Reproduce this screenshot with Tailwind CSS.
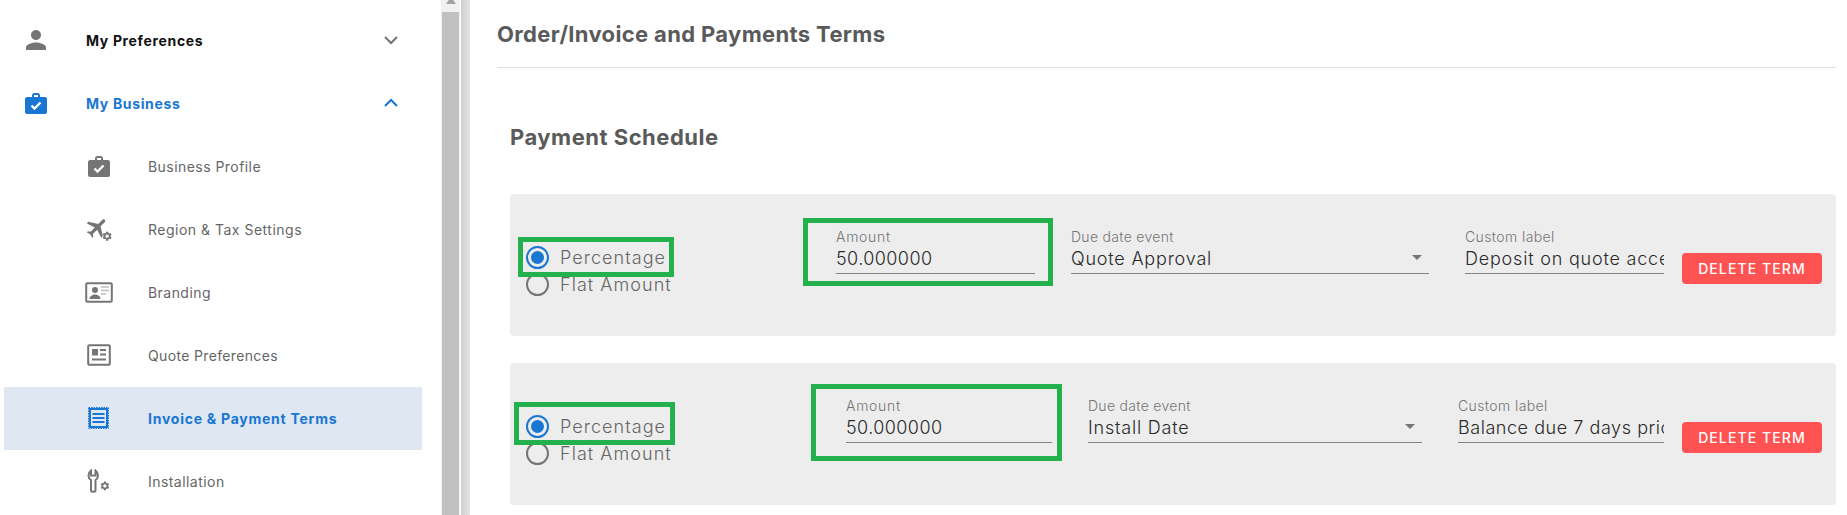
<!doctype html>
<html><head><meta charset="utf-8"><script src="https://cdn.jsdelivr.net/npm/@tailwindcss/browser@4"></script></head>
<body class="bg-white">
<div class="flex h-[515px] w-[1847px] overflow-hidden font-['Inter','Liberation_Sans',sans-serif] text-[#5f5f5f]">
  <aside class="w-[441px] shrink-0 pl-[4px] pr-[19px] pt-[8.5px]">
    <div class="flex h-[63px] items-center pt-[0.5px]">
      <svg class="ml-[17px] h-[30px] w-[30px] fill-[#757575]" viewBox="0 0 24 24"><path d="M12 12c2.210 0 4-1.790 4-4s-1.790-4-4-4-4 1.790-4 4 1.790 4 4 4zm0 2c-2.670 0-8 1.340-8 4v2h16v-2c0-2.660-5.330-4-8-4z"/></svg>
      <span class="ml-[35px] text-[14px] font-bold tracking-[0.65px] text-[#111]">My Preferences</span>
      <svg class="ml-auto mr-[24px] h-[14px] w-[14px] fill-none stroke-[#757575] stroke-2" viewBox="0 0 14 14"><path d="M1 4l6 6 6-6"/></svg>
    </div>
    <div class="flex h-[63px] items-center pt-[0.5px]">
      <svg class="ml-[20px] h-[24px] w-[24px]" viewBox="0 0 24 24"><path class="fill-[#1976d2]" d="M8 4.500C8 3 9 2 10.500 2h3C15 2 16 3 16 4.500V6h5c1 0 2 1 2 2v13c0 1-1 2-2 2H3c-1 0-2-1-2-2V8c0-1 1-2 2-2h5V4.500zM10 4v2h4V4h-4z"/><path class="fill-none stroke-white stroke-[2.4]" d="M7.500 14.500l3 3 6-6"/></svg>
      <span class="ml-[38px] text-[14px] font-bold tracking-[0.65px] text-[#1976d2]">My Business</span>
      <svg class="ml-auto mr-[24px] h-[14px] w-[14px] fill-none stroke-[#1976d2] stroke-2" viewBox="0 0 14 14"><path d="M1 10l6-6 6 6"/></svg>
    </div>
    <div class="flex h-[63px] items-center pt-[0.5px]">
      <svg class="ml-[83px] h-[24px] w-[24px]" viewBox="0 0 24 24"><path class="fill-[#757575]" d="M8 4.500C8 3 9 2 10.500 2h3C15 2 16 3 16 4.500V6h5c1 0 2 1 2 2v13c0 1-1 2-2 2H3c-1 0-2-1-2-2V8c0-1 1-2 2-2h5V4.500zM10 4v2h4V4h-4z"/><path class="fill-none stroke-white stroke-[2.4]" d="M7.500 14.500l3 3 6-6"/></svg>
      <span class="ml-[37px] text-[14px] tracking-[0.45px] text-[#666]">Business Profile</span>
    </div>
    <div class="flex h-[63px] items-center pt-[0.5px]">
      <svg class="ml-[83px] h-[26px] w-[26px] fill-[#757575]" viewBox="0 0 26 26"><path transform="translate(-1.500 -1.500) rotate(45 12 12) scale(1.080)" d="M21 16v-2l-8-5V3.500c0-.83-.67-1.500-1.500-1.500S10 2.670 10 3.500V9l-8 5v2l8-2.500V19l-2 1.500V22l3.500-1 3.500 1v-1.500L13 19v-5.500l8 2.500z"/><path transform="translate(14.500 14.500) scale(0.47)" d="M19.140 12.940c.04-.3.06-.61.06-.94 0-.32-.02-.64-.07-.94l2.030-1.580a.49.49 0 0 0 .12-.61l-1.920-3.320a.488.488 0 0 0-.59-.22l-2.390.96c-.5-.38-1.030-.7-1.620-.94l-.36-2.540a.484.484 0 0 0-.48-.41h-3.840c-.24 0-.43.17-.47.41l-.36 2.540c-.59.24-1.130.57-1.620.94l-2.390-.96c-.22-.08-.47 0-.59.22L2.740 8.870c-.12.21-.08.47.12.61l2.030 1.580c-.05.3-.09.63-.09.94s.02.64.07.94l-2.030 1.580a.49.49 0 0 0-.12.61l1.920 3.320c.12.22.37.29.59.22l2.390-.96c.5.38 1.030.7 1.620.94l.36 2.540c.05.24.24.41.48.41h3.840c.24 0 .44-.17.47-.41l.36-2.540c.59-.24 1.130-.56 1.620-.94l2.390.96c.22.08.47 0 .59-.22l1.920-3.320c.12-.22.07-.47-.12-.61l-2.010-1.580zM12 15.600c-1.980 0-3.600-1.620-3.600-3.600s1.620-3.600 3.600-3.600 3.600 1.620 3.600 3.600-1.620 3.600-3.600 3.600z"/></svg>
      <span class="ml-[35px] text-[14px] tracking-[0.5px] text-[#666]">Region &amp; Tax Settings</span>
    </div>
    <div class="flex h-[63px] items-center pt-[0.5px]">
      <svg class="ml-[81px] h-[21px] w-[28px]" viewBox="0 0 28 21"><rect x="1.200" y="1.200" width="25.600" height="18.600" rx="1" class="fill-none stroke-[#757575] stroke-2"/><circle cx="10" cy="8" r="3" class="fill-[#757575]"/><path class="fill-[#757575]" d="M4.500 17c0-3 3-4.500 5.500-4.500s5.500 1.500 5.500 4.500z"/><path class="fill-none stroke-[#bdbdbd] stroke-[1.500]" d="M16 5h8M16 8.500h8M16 12h5"/></svg>
      <span class="ml-[35px] text-[14px] tracking-[0.45px] text-[#666]">Branding</span>
    </div>
    <div class="flex h-[63px] items-center pt-[0.5px]">
      <svg class="ml-[83px] h-[22px] w-[24px]" viewBox="0 0 24 22"><rect x="1.200" y="1.200" width="21.600" height="19.600" rx="1" class="fill-none stroke-[#757575] stroke-2"/><rect x="5" y="5" width="6" height="6.500" class="fill-[#757575]"/><path class="fill-none stroke-[#757575] stroke-2" d="M13 6h6M13 10.500h6M5 15.500h14"/></svg>
      <span class="ml-[37px] text-[14px] tracking-[0.35px] text-[#666]">Quote Preferences</span>
    </div>
    <div class="flex h-[63px] items-center bg-[#dee7f2] pt-[0.5px]">
      <svg class="ml-[84px] h-[22px] w-[21px]" viewBox="0 0 21 22"><rect x="0.500" y="0.500" width="20" height="21" stroke-dasharray="1.500 1" class="fill-none stroke-[#1976d2] stroke-1"/><rect x="2" y="2" width="17" height="18" class="fill-none stroke-[#1976d2] stroke-2"/><path class="fill-none stroke-[#1976d2] stroke-2" d="M4.500 7h12M4.500 11h12M4.500 15h12"/></svg>
      <span class="ml-[39px] text-[14px] font-bold tracking-[0.75px] text-[#1976d2]">Invoice &amp; Payment Terms</span>
    </div>
    <div class="flex h-[63px] items-center pt-[0.5px]">
      <svg class="ml-[83px] h-[24px] w-[24px]" viewBox="0 0 24 24"><path class="fill-none stroke-[#757575] stroke-2" d="M4 1.500C2 3 1.500 5 1.500 6.500c0 2 1 3.500 2.500 4.500v10c0 1 .7 1.800 1.500 1.800H7c.8 0 1.500-.8 1.500-1.800V11C10 10 11 8.500 11 6.500 11 5 10.500 3 8.500 1.500V6.500H4z"/><path class="fill-[#757575]" transform="translate(12.500 11.500) scale(0.45)" d="M19.140 12.940c.04-.3.06-.61.06-.94 0-.32-.02-.64-.07-.94l2.030-1.580a.49.49 0 0 0 .12-.61l-1.920-3.320a.488.488 0 0 0-.59-.22l-2.390.96c-.5-.38-1.030-.7-1.620-.94l-.36-2.540a.484.484 0 0 0-.48-.41h-3.840c-.24 0-.43.17-.47.41l-.36 2.540c-.59.24-1.130.57-1.620.94l-2.390-.96c-.22-.08-.47 0-.59.22L2.740 8.870c-.12.21-.08.47.12.61l2.030 1.580c-.05.3-.09.63-.09.94s.02.64.07.94l-2.030 1.580a.49.49 0 0 0-.12.61l1.920 3.320c.12.22.37.29.59.22l2.390-.96c.5.38 1.030.7 1.620.94l.36 2.540c.05.24.24.41.48.41h3.840c.24 0 .44-.17.47-.41l.36-2.540c.59-.24 1.130-.56 1.620-.94l2.390.96c.22.08.47 0 .59-.22l1.920-3.320c.12-.22.07-.47-.12-.61l-2.010-1.580zM12 15.600c-1.980 0-3.600-1.620-3.600-3.600s1.620-3.600 3.600-3.600 3.600 1.620 3.600 3.600-1.620 3.600-3.600 3.600z"/></svg>
      <span class="ml-[37px] text-[14px] tracking-[0.45px] text-[#666]">Installation</span>
    </div>
  </aside>

  <div class="relative w-[19px] shrink-0 bg-[#f1f1f1] pl-[1px] pr-[1px] pt-[12px]">
    <div class="absolute left-[5px] top-[-3px] h-0 w-0 border-x-[5px] border-b-[7px] border-x-transparent border-b-[#a3a3a3]"></div>
    <div class="h-full bg-[#c1c1c1]"></div>
  </div>
  <div class="ml-[1px] w-[9px] shrink-0 bg-gradient-to-r from-[#cfcfcf] to-[#e4e4e4]"></div>

  <main class="relative min-w-0 flex-1 pl-[27px] pr-[11px]">
    <div class="flex h-[68px] items-center border-b border-[#dedede] pt-[2px]">
      <h1 class="text-[22px] font-bold tracking-[0.35px] text-[#5a5a5a]">Order/Invoice and Payments Terms</h1>
    </div>
    <div class="pl-[13px]">
      <h2 class="mt-[56px] text-[22px] font-bold leading-[26px] tracking-[0.5px] text-[#5a5a5a]">Payment Schedule</h2>
      <div class="mt-[44px] flex h-[142px] rounded-[4px] bg-[#ededed]">
        <div class="ml-[16px] mt-[50px] w-[310px] shrink-0 text-[18px] font-light tracking-[1.05px] text-[#666]">
          <label class="flex h-[27px] items-center gap-[11px]"><span class="flex h-[23px] w-[23px] items-center justify-center rounded-full border-2 border-[#1976d2]"><span class="h-[13px] w-[13px] rounded-full bg-[#1976d2]"></span></span>Percentage</label>
          <label class="flex h-[27px] items-center gap-[11px]"><span class="h-[23px] w-[23px] rounded-full border-2 border-[#757575]"></span>Flat Amount</label>
        </div>
        <div class="mt-[34px] w-[199px] shrink-0 border-b border-[#858585] h-[46px]">
          <div class="text-[14px] leading-[18px] font-light tracking-[0.7px] text-[#757575]">Amount</div>
          <div class="pt-[1px] text-[18px] leading-[24px] font-light tracking-[0.42px] text-[#2a2a2a]">50.000000</div>
        </div>
        <div class="ml-[36px] mt-[34px] w-[358px] shrink-0 border-b border-[#858585] h-[46px] relative">
          <div class="text-[14px] leading-[18px] font-light tracking-[0.3px] text-[#757575]">Due date event</div>
          <div class="pt-[1px] text-[18px] leading-[24px] font-light tracking-[0.8px] text-[#2a2a2a]">Quote Approval</div>
          <div class="absolute right-[7px] top-[27px] h-0 w-0 border-x-[5px] border-t-[5px] border-x-transparent border-t-[#757575]"></div>
        </div>
        <div class="ml-[36px] mt-[34px] w-[199px] shrink-0 border-b border-[#858585] h-[46px] overflow-hidden">
          <div class="text-[14px] leading-[18px] font-light tracking-[0.4px] text-[#757575]">Custom label</div>
          <div class="whitespace-nowrap pt-[1px] text-[18px] leading-[24px] font-light tracking-[0.8px] text-[#2a2a2a]">Deposit on quote acce</div>
        </div>
        <button class="ml-[18px] mt-[59px] h-[31px] w-[140px] rounded-[4px] bg-[#ff5252] text-[14px] font-medium tracking-[1.1px] text-white">DELETE TERM</button>
      </div>
      <div class="mt-[27px] flex h-[142px] rounded-[4px] bg-[#ededed]">
        <div class="ml-[16px] mt-[50px] w-[320px] shrink-0 text-[18px] font-light tracking-[1.05px] text-[#666]">
          <label class="flex h-[27px] items-center gap-[11px]"><span class="flex h-[23px] w-[23px] items-center justify-center rounded-full border-2 border-[#1976d2]"><span class="h-[13px] w-[13px] rounded-full bg-[#1976d2]"></span></span>Percentage</label>
          <label class="flex h-[27px] items-center gap-[11px]"><span class="h-[23px] w-[23px] rounded-full border-2 border-[#757575]"></span>Flat Amount</label>
        </div>
        <div class="mt-[34px] w-[206px] shrink-0 border-b border-[#858585] h-[46px]">
          <div class="text-[14px] leading-[18px] font-light tracking-[0.7px] text-[#757575]">Amount</div>
          <div class="pt-[1px] text-[18px] leading-[24px] font-light tracking-[0.42px] text-[#2a2a2a]">50.000000</div>
        </div>
        <div class="ml-[36px] mt-[34px] w-[334px] shrink-0 border-b border-[#858585] h-[46px] relative">
          <div class="text-[14px] leading-[18px] font-light tracking-[0.3px] text-[#757575]">Due date event</div>
          <div class="pt-[1px] text-[18px] leading-[24px] font-light tracking-[0.8px] text-[#2a2a2a]">Install Date</div>
          <div class="absolute right-[7px] top-[27px] h-0 w-0 border-x-[5px] border-t-[5px] border-x-transparent border-t-[#757575]"></div>
        </div>
        <div class="ml-[36px] mt-[34px] w-[206px] shrink-0 border-b border-[#858585] h-[46px] overflow-hidden">
          <div class="text-[14px] leading-[18px] font-light tracking-[0.4px] text-[#757575]">Custom label</div>
          <div class="whitespace-nowrap pt-[1px] text-[18px] leading-[24px] font-light tracking-[0.55px] text-[#2a2a2a]">Balance due 7 days pric</div>
        </div>
        <button class="ml-[18px] mt-[59px] h-[31px] w-[140px] rounded-[4px] bg-[#ff5252] text-[14px] font-medium tracking-[1.1px] text-white">DELETE TERM</button>
      </div>
    </div>
    <div class="absolute left-[48px] top-[237px] h-[40px] w-[156px] border-[5px] border-[#22b14c]"></div>
    <div class="absolute left-[333px] top-[218px] h-[68px] w-[250px] border-[5px] border-[#22b14c]"></div>
    <div class="absolute left-[44px] top-[402px] h-[43px] w-[161px] border-[5px] border-[#22b14c]"></div>
    <div class="absolute left-[341px] top-[384px] h-[77px] w-[251px] border-[5px] border-[#22b14c]"></div>
  </main>
</div>
</body></html>
